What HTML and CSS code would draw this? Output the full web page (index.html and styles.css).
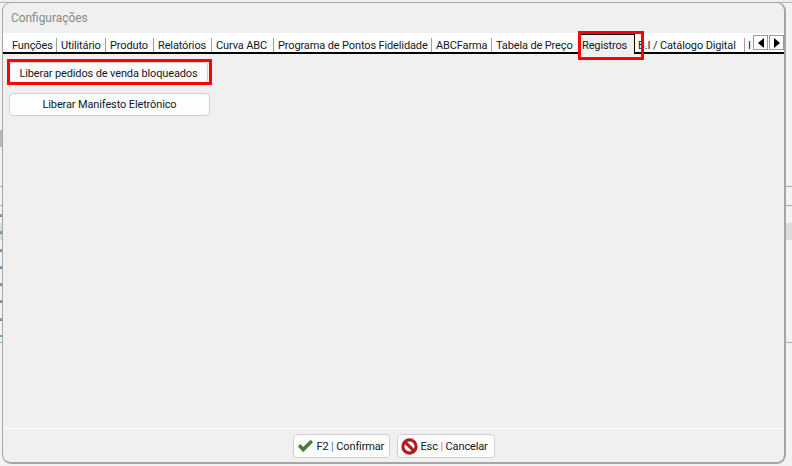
FILE: index.html
```html
<!DOCTYPE html>
<html lang="pt-BR">
<head>
<meta charset="utf-8">
<title>Configurações</title>
<link rel="stylesheet" href="styles.css">
</head>
<body>
<div class="desktop">
  <div class="backdrop-top"></div>
  <div class="backdrop-line line-a"></div>
  <div class="backdrop-line line-b"></div>
  <div class="backdrop-band"></div>
  <div class="backdrop-line line-c"></div>
  <div class="backdrop-left"></div>
  <div class="backdrop-dots"></div>
  <div class="dialog">
    <div class="title">Configurações</div>
    <div class="tabbar">
      <div class="tab tab-funcoes">Funções</div>
      <div class="tab tab-util">Utilitário</div>
      <div class="tab tab-prod">Produto</div>
      <div class="tab tab-rel">Relatórios</div>
      <div class="tab tab-curva">Curva ABC</div>
      <div class="tab tab-prog">Programa de Pontos Fidelidade</div>
      <div class="tab tab-abc">ABCFarma</div>
      <div class="tab tab-preco">Tabela de Preço</div>
      <div class="tab tab-reg active">Registros</div>
      <div class="tab tab-bi">B.I / Catálogo Digital</div>
      <div class="tab tab-cut">I</div>
      <div class="arrows">
        <div class="arrow"><svg width="8" height="10" viewBox="0 0 8 10"><path d="M7 0V10L1 5Z" fill="#000"/></svg></div>
        <div class="arrow"><svg width="8" height="10" viewBox="0 0 8 10"><path d="M1 0V10L7 5Z" fill="#000"/></svg></div>
      </div>
    </div>
    <div class="content">
      <button class="btn btn-first">Liberar pedidos de venda bloqueados</button>
      <button class="btn btn-second">Liberar Manifesto Eletrônico</button>
    </div>
    <div class="footer">
      <button class="btn foot-btn foot-ok">
        <svg width="17" height="14" viewBox="0 0 18 14"><path d="M1 7.5 L3.5 5 L6.5 8 L14.5 0.5 L17 3 L6.5 13.5 Z" fill="#4a7c3a"/></svg>
        <span class="foot-label">F2 <i class="sep-blue">|</i> Confirmar</span>
      </button>
      <button class="btn foot-btn foot-cancel">
        <svg width="17" height="17" viewBox="0 0 16 16"><circle cx="8" cy="8" r="6.2" fill="#fff" stroke="#b01c22" stroke-width="3"/><path d="M3.6 3.6 L12.4 12.4" stroke="#b01c22" stroke-width="3"/></svg>
        <span class="foot-label">Esc <i class="sep-orange">|</i> Cancelar</span>
      </button>
    </div>
  </div>
  <div class="mark mark-btn"></div>
  <div class="mark mark-tab"></div>
</div>
</body>
</html>
```
FILE: styles.css
```css
* { box-sizing: border-box; }
html, body { margin: 0; padding: 0; }
body {
  width: 792px;
  height: 466px;
  overflow: hidden;
  background: #f3f3f3;
  font-family: Roboto, "Open Sans", sans-serif;
  font-size: 11px;
  letter-spacing: -0.13px;
  color: #101828;
}
.desktop { position: relative; width: 792px; height: 466px; overflow: hidden; }
.backdrop-top { position: absolute; left: 0; right: 0; top: 0; height: 3px; background: #ededed; border-bottom: 1px solid #b4b4b4; }
.backdrop-line { position: absolute; left: 0; right: 0; height: 1px; background: #a8a8a8; }
.line-a { top: 186px; }
.line-b { top: 205px; }
.line-c { top: 342px; }
.backdrop-band { position: absolute; left: 0; right: 0; top: 223px; height: 17px; background: #dcdcdc; }
.backdrop-left { position: absolute; left: 0; top: 130px; width: 2px; height: 17px; background: #b8b8b8; }
.backdrop-dots {
  position: absolute;
  left: 0;
  top: 214px;
  width: 2px;
  height: 123px;
  background: repeating-linear-gradient(to bottom, #5aa6dc 0, #5aa6dc 2px, #a8794a 2px, #a8794a 3px, transparent 3px, transparent 17.3px);
}
.dialog {
  position: absolute;
  left: 2px;
  top: 2px;
  width: 784px;
  height: 462px;
  display: flex;
  flex-direction: column;
  background: #f0f0f0;
  border: 1px solid #a6a6a6;
  border-width: 1px 2px 2px 1px;
  border-radius: 9px;
}
.title {
  height: 30px;
  padding: 7px 0 0 8px;
  font-size: 11.9px;
  letter-spacing: 0;
  line-height: 17px;
  color: #8a8a8a;
}
.tabbar {
  position: relative;
  display: flex;
  height: 21px;
  padding-left: 3px;
  background: #fff;
  border-bottom: 2px solid #000;
  width: 781px;
}
.tab {
  flex: none;
  height: 14px;
  margin-top: 5px;
  padding: 0 0 0 6px;
  line-height: 16px;
  white-space: nowrap;
  border-right: 1px solid #a0a0a0;
}
.tab-funcoes { width: 51px; }
.tab-util { width: 49px; padding-left: 4px; }
.tab-prod { width: 48px; padding-left: 4px; }
.tab-rel { width: 58px; padding-left: 4px; }
.tab-curva { width: 62px; padding-left: 4px; }
.tab-prog { width: 158px; padding-left: 4px; }
.tab-abc { width: 60px; padding-left: 4px; }
.tab-preco { width: 87px; padding-left: 4px; border-right: 0; }
.tab-reg { width: 56px; }
.tab-bi { width: 110px; padding-left: 3px; }
.tab-cut { width: 7px; padding-left: 3px; border: 0; }
.tab.active {
  height: 20px;
  margin-top: 1px;
  padding: 3px 0 0 3px;
  background: #f0f0f0;
  border-top: 1px solid #000;
  border-right: 1px solid #000;
}
.arrows { position: absolute; right: 0; top: 2px; display: flex; gap: 1px; }
.arrow {
  width: 15px;
  height: 15px;
  display: flex;
  align-items: center;
  justify-content: center;
  background: #fff;
  border: 1px solid #9a9a9a;
}
.content { flex: 1; padding: 8px 0 0 6px; display: flex; flex-direction: column; align-items: flex-start; }
.btn {
  display: block;
  font: inherit;
  letter-spacing: inherit;
  color: #101828;
  background: #fdfdfd;
  border: 1px solid #d0d0d0;
  border-radius: 4px;
  padding: 0;
}
.btn-first { width: 199px; height: 22px; }
.btn-second { width: 201px; height: 23px; margin-top: 9px; }
.footer {
  height: 34px;
  display: flex;
  justify-content: center;
  gap: 7px;
  padding-top: 5px;
  border-top: 1px solid #fff;
}
.foot-btn {
  height: 24px;
  display: flex;
  align-items: center;
  gap: 3px;
  padding-left: 3px;
}
.foot-label { white-space: nowrap; }
.foot-ok { width: 97px; }
.foot-cancel { width: 98px; }
.foot-btn i { font-style: normal; }
.sep-blue { color: #2a7ab8; }
.sep-orange { color: #d07a20; }
.mark { position: absolute; border: 3px solid #f00; }
.mark-btn { left: 7px; top: 59px; width: 205px; height: 26px; }
.mark-tab { left: 578px; top: 31px; width: 66px; height: 29px; }
```
